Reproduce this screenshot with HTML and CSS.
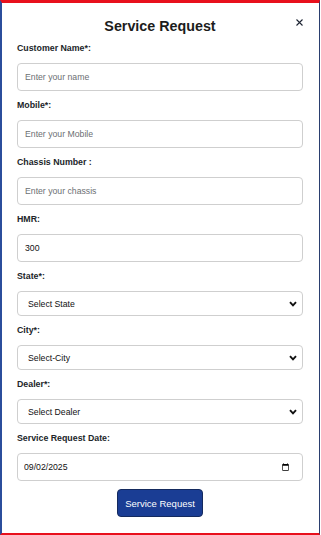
FILE: index.html
```html
<!DOCTYPE html>
<html lang="en">
<head>
    <meta charset="UTF-8">
    <meta name="viewport" content="width=device-width, initial-scale=1.0">
    <title>Service Request</title>
    <link rel="stylesheet" href="styles.css">
</head>
<body>
    <div class="modal">
        <div class="modal-header">
            <h2 class="modal-title">Service Request</h2>
            <button type="button" class="close-btn" aria-label="Close">
                <svg width="7" height="7" viewBox="0 0 7 7"><path d="M0.5 0.5 L6.5 6.5 M6.5 0.5 L0.5 6.5" stroke="#1d2433" stroke-width="1.1" fill="none"/></svg>
            </button>
        </div>
        <form class="request-form">
            <div class="form-group">
                <label for="name">Customer Name*:</label>
                <input type="text" id="name" class="field" placeholder="Enter your name">
            </div>
            <div class="form-group">
                <label for="mobile">Mobile*:</label>
                <input type="text" id="mobile" class="field" placeholder="Enter your Mobile">
            </div>
            <div class="form-group">
                <label for="chassis">Chassis Number :</label>
                <input type="text" id="chassis" class="field" placeholder="Enter your chassis">
            </div>
            <div class="form-group">
                <label for="hmr">HMR:</label>
                <input type="text" id="hmr" class="field" value="300">
            </div>
            <div class="form-group">
                <label for="state">State*:</label>
                <div class="select-wrap">
                    <select id="state" class="field select">
                        <option>Select State</option>
                    </select>
                    <svg class="chevron" width="8" height="6" viewBox="0 0 8 6"><path d="M1 1.2 L4 4.4 L7 1.2" stroke="#111" stroke-width="1.9" fill="none"/></svg>
                </div>
            </div>
            <div class="form-group">
                <label for="city">City*:</label>
                <div class="select-wrap">
                    <select id="city" class="field select">
                        <option>Select-City</option>
                    </select>
                    <svg class="chevron" width="8" height="6" viewBox="0 0 8 6"><path d="M1 1.2 L4 4.4 L7 1.2" stroke="#111" stroke-width="1.9" fill="none"/></svg>
                </div>
            </div>
            <div class="form-group">
                <label for="dealer">Dealer*:</label>
                <div class="select-wrap">
                    <select id="dealer" class="field select">
                        <option>Select Dealer</option>
                    </select>
                    <svg class="chevron" width="8" height="6" viewBox="0 0 8 6"><path d="M1 1.2 L4 4.4 L7 1.2" stroke="#111" stroke-width="1.9" fill="none"/></svg>
                </div>
            </div>
            <div class="form-group">
                <label for="date">Service Request Date:</label>
                <input type="date" id="date" class="field date" value="2025-09-02">
            </div>
            <div class="actions">
                <button type="button" class="submit-btn">Service Request</button>
            </div>
        </form>
    </div>
</body>
</html>
```

FILE: styles.css
```css
body {
    margin: 0;
    background-color: #ffffff;
    font-family: "Liberation Sans", Arial, sans-serif;
}

.modal {
    box-sizing: border-box;
    width: 320px;
    height: 535px;
    background-color: #ffffff;
    border-top: 3px solid #e8101c;
    border-bottom: 2px solid #e8101c;
    border-left: 2px solid #2b4d9c;
    border-right: 1px solid #2a3e6e;
    padding: 14px 16px 0 15px;
}

.modal-header {
    display: grid;
    grid-template-columns: 1fr auto 1fr;
    align-items: start;
    margin-bottom: 7px;
}

.modal-title {
    grid-column: 2;
    margin: 0;
    font-size: 14.3px;
    line-height: 18px;
    font-weight: 700;
    color: #1c1c1c;
}

.close-btn {
    grid-column: 3;
    justify-self: end;
    margin: 2px 0 0 0;
    padding: 0;
    border: none;
    background: none;
    width: 7px;
    height: 7px;
    display: flex;
    cursor: pointer;
}

.form-group {
    margin-bottom: 8px;
}

label {
    display: block;
    font-size: 8.8px;
    line-height: 12px;
    font-weight: 700;
    color: #212529;
    margin-bottom: 9px;
}

.field {
    box-sizing: border-box;
    display: block;
    width: 100%;
    height: 28px;
    margin: 0;
    padding: 0 7px;
    border: 1px solid #cfcfcf;
    border-radius: 4px;
    background-color: #ffffff;
    font-family: "Liberation Sans", Arial, sans-serif;
    font-size: 8.7px;
    color: #111;
    outline: none;
}

.field::placeholder {
    color: #6c6f73;
}

.select-wrap {
    position: relative;
}

.select {
    height: 25px;
    padding-left: 10px;
    appearance: none;
    -webkit-appearance: none;
}

.chevron {
    position: absolute;
    right: 6px;
    top: 10px;
    pointer-events: none;
}

.date {
    padding-left: 6px;
    padding-right: 10px;
}

.date::-webkit-datetime-edit-fields-wrapper,
.date::-webkit-datetime-edit-month-field,
.date::-webkit-datetime-edit-day-field,
.date::-webkit-datetime-edit-year-field,
.date::-webkit-datetime-edit-text {
    padding: 0;
    margin: 0;
}

.actions {
    display: flex;
    justify-content: center;
}

.submit-btn {
    height: 28px;
    padding: 0 7px;
    background-color: #1a3d94;
    color: #ffffff;
    border: 1px solid #142a5e;
    border-radius: 4px;
    font-family: "Liberation Sans", Arial, sans-serif;
    font-size: 9.5px;
    cursor: pointer;
}
```
